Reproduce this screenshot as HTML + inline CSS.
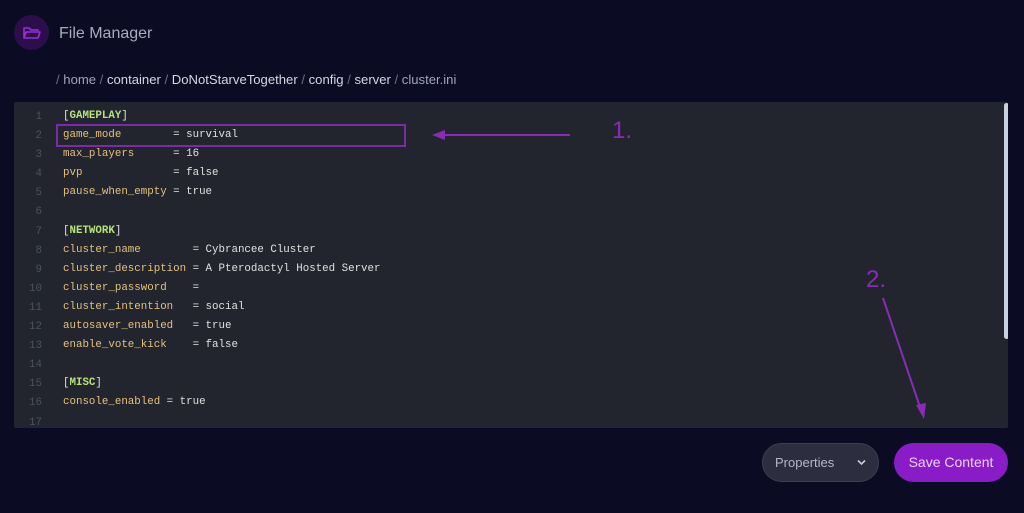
<!DOCTYPE html>
<html><head><meta charset="utf-8"><style>
body{margin:0;width:1024px;height:513px;background:#0b0b23;font-family:"Liberation Sans",sans-serif;position:relative;overflow:hidden}
.ic{position:absolute;left:14px;top:15px;width:35px;height:35px;border-radius:50%;background:#2c0e4d}
.title{position:absolute;left:59px;top:25px;font-size:16px;color:#a9abbd}
.bc{position:absolute;left:56px;top:72px;font-size:13.1px;color:#d4d6e0}
.bc .s{color:#6b6f85}.bc .g{color:#a0a4b8}
.ed{position:absolute;left:14px;top:102px;width:994px;height:326px;background:#22252e;border-radius:2px;overflow:hidden}
.ln{position:absolute;left:0;width:28px;text-align:right;font:10.8px "Liberation Mono",monospace;color:#4b5160}
.cd{position:absolute;left:49px;font:10.8px "Liberation Mono",monospace;color:#e0e0e0;white-space:pre}
.k{color:#e6c07b}.h{color:#b6e37a;font-weight:bold}
.sb{position:absolute;left:990px;top:1px;width:5px;height:236px;background:#c9d1de;border-radius:3px}
.box{position:absolute;left:56px;top:124px;width:350px;height:23px;border:2px solid #7d2aa8;box-sizing:border-box}
.prop{position:absolute;left:762px;top:443px;width:117px;height:39px;border-radius:20px;background:#2c2d3e;border:1px solid #3c3e50;box-sizing:border-box;color:#b6b8c6;font-size:13px;line-height:37px;padding-left:12px}
.save{position:absolute;left:894px;top:443px;width:114px;height:39px;border-radius:20px;background:#8a1cc8;color:#e6d3f3;font-size:14px;line-height:39px;text-align:center}
.n{position:absolute;color:#8a2bb8;font-size:24px}
</style></head><body>
<div class="ic"><svg width="35" height="35" viewBox="0 0 35 35"><path d="M10 23V13h5l2 2h7v1M10 23l2-6h14l-2 6z" fill="none" stroke="#9a2fd6" stroke-width="1.6" stroke-linejoin="round"/></svg></div>
<div class="title">File Manager</div>
<div class="bc"><span class="s">/ </span><span class="g">home</span><span class="s"> / </span>container<span class="s"> / </span>DoNotStarveTogether<span class="s"> / </span>config<span class="s"> / </span>server<span class="s"> / </span><span class="g">cluster.ini</span></div>
<div class="ed">
<div class="sb"></div>
<div class="ln" style="top:6px;line-height:19.1px">1<br>2<br>3<br>4<br>5<br>6<br>7<br>8<br>9<br>10<br>11<br>12<br>13<br>14<br>15<br>16<br>17</div>
<div class="cd" style="top:5px;line-height:19.1px">[<span class="h">GAMEPLAY</span>]
<span class="k">game_mode</span>        = survival
<span class="k">max_players</span>      = 16
<span class="k">pvp</span>              = false
<span class="k">pause_when_empty</span> = true

[<span class="h">NETWORK</span>]
<span class="k">cluster_name</span>        = Cybrancee Cluster
<span class="k">cluster_description</span> = A Pterodactyl Hosted Server
<span class="k">cluster_password</span>    =
<span class="k">cluster_intention</span>   = social
<span class="k">autosaver_enabled</span>   = true
<span class="k">enable_vote_kick</span>    = false

[<span class="h">MISC</span>]
<span class="k">console_enabled</span> = true
</div>
</div>
<div class="box"></div>
<svg style="position:absolute;left:0;top:0" width="1024" height="513"><g stroke="#8a2bb8" stroke-width="2" fill="#8a2bb8"><line x1="440" y1="135" x2="570" y2="135"/><polygon points="432,135 445,130 445,140" stroke="none"/><line x1="883" y1="298" x2="921" y2="410"/><polygon points="924,419 916,405 926,403" stroke="none"/></g></svg>
<div class="n" style="left:612px;top:117px">1.</div>
<div class="n" style="left:866px;top:266px">2.</div>
<div class="prop">Properties<svg style="position:absolute;left:94px;top:15px" width="9" height="7" viewBox="0 0 9 7"><path d="M1 1.5l3.5 3.5 3.5-3.5" fill="none" stroke="#c8cad6" stroke-width="1.6"/></svg></div>
<div class="save">Save Content</div>
</body></html>
